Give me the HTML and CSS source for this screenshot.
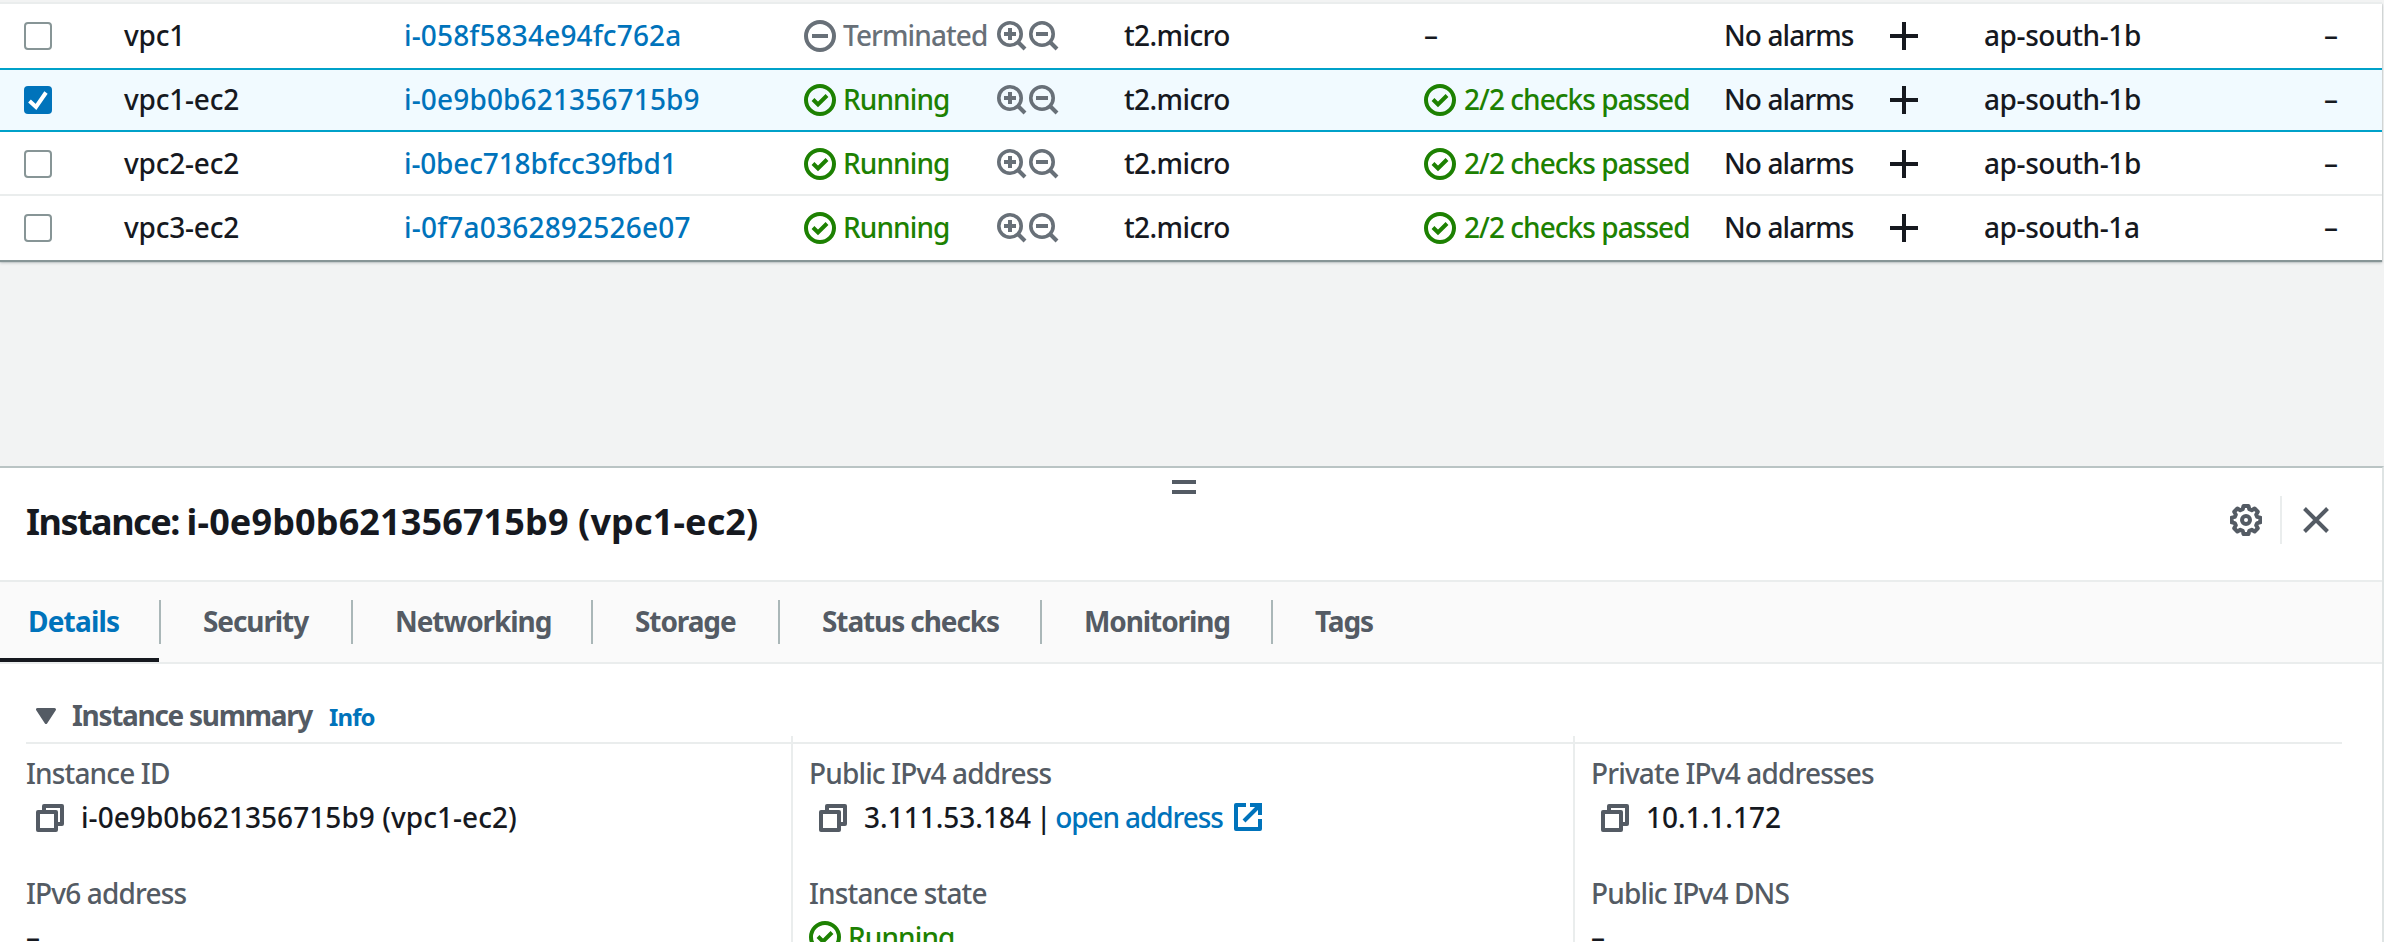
FILE: index.html
```html
<!DOCTYPE html>
<html lang="en">
<head>
<meta charset="utf-8">
<title>Instances | EC2</title>
<link rel="stylesheet" href="styles.css">
</head>
<body>
<svg class="sprite" aria-hidden="true">
  <symbol id="ok" viewBox="0 0 32 32"><circle cx="16" cy="16" r="14" fill="none" stroke="currentColor" stroke-width="4"/><path d="M9 15.5l5 5 9-9" fill="none" stroke="currentColor" stroke-width="4"/></symbol>
  <symbol id="stopped" viewBox="0 0 32 32"><circle cx="16" cy="16" r="14" fill="none" stroke="currentColor" stroke-width="4"/><path d="M8 16h16" stroke="currentColor" stroke-width="4"/></symbol>
  <symbol id="zoom-in" viewBox="0 0 30 30"><circle cx="13" cy="13" r="11.2" fill="none" stroke="currentColor" stroke-width="3.6"/><path d="M7 13h12M13 7v12" stroke="currentColor" stroke-width="4"/><path d="M20.5 20.5l7.5 7.5" stroke="currentColor" stroke-width="4"/></symbol>
  <symbol id="zoom-out" viewBox="0 0 30 30"><circle cx="13" cy="13" r="11.2" fill="none" stroke="currentColor" stroke-width="3.6"/><path d="M7 13h12" stroke="currentColor" stroke-width="4"/><path d="M20.5 20.5l7.5 7.5" stroke="currentColor" stroke-width="4"/></symbol>
  <symbol id="plus" viewBox="0 0 28 28"><path d="M14 0v28M0 14h28" stroke="currentColor" stroke-width="4"/></symbol>
  <symbol id="copy" viewBox="0 0 28 28"><path d="M8 8V2h18v18h-4" fill="none" stroke="currentColor" stroke-width="4" stroke-linejoin="round"/><path d="M2 8h18v18H2z" fill="none" stroke="currentColor" stroke-width="4" stroke-linejoin="round"/></symbol>
  <symbol id="external" viewBox="0 0 28 28"><path d="M12 2H2v24h24V16" fill="none" stroke="currentColor" stroke-width="4" stroke-linejoin="round"/><path d="M16 2h10v10" fill="none" stroke="currentColor" stroke-width="4"/><path d="M10 18L25 3" stroke="currentColor" stroke-width="4"/></symbol>
</svg>

<main class="page">
  <section class="table">
    <div class="row">
      <span class="check"></span><span class="cell">vpc1</span><a class="cell link id-a">i-058f5834e94fc762a</a>
      <span class="state muted"><svg class="i32"><use href="#stopped"/></svg><span class="cell tight state-text">Terminated</span><svg class="i30"><use href="#zoom-in"/></svg><svg class="i30"><use href="#zoom-out"/></svg></span>
      <span class="cell type">t2.micro</span><span class="cell">–</span>
      <span class="alarm"><span class="cell tight alarm-text">No alarms</span><svg class="i28"><use href="#plus"/></svg></span>
      <span class="cell zone">ap-south-1b</span><span class="cell">–</span>
    </div>
    <div class="row selected">
      <span class="check checked"><svg viewBox="0 0 28 28"><path d="M5.500 15l6.500 6L22 6.500" fill="none" stroke="#fff" stroke-width="4"/></svg></span><span class="cell">vpc1-ec2</span><a class="cell link id-b">i-0e9b0b621356715b9</a>
      <span class="state"><svg class="i32 green"><use href="#ok"/></svg><span class="cell tight state-text green">Running</span><svg class="i30"><use href="#zoom-in"/></svg><svg class="i30"><use href="#zoom-out"/></svg></span>
      <span class="cell type">t2.micro</span><span class="status green"><svg class="i32"><use href="#ok"/></svg><span class="cell status-text">2/2 checks passed</span></span>
      <span class="alarm"><span class="cell tight alarm-text">No alarms</span><svg class="i28"><use href="#plus"/></svg></span>
      <span class="cell zone">ap-south-1b</span><span class="cell">–</span>
    </div>
    <div class="row">
      <span class="check"></span><span class="cell">vpc2-ec2</span><a class="cell link id-c">i-0bec718bfcc39fbd1</a>
      <span class="state"><svg class="i32 green"><use href="#ok"/></svg><span class="cell tight state-text green">Running</span><svg class="i30"><use href="#zoom-in"/></svg><svg class="i30"><use href="#zoom-out"/></svg></span>
      <span class="cell type">t2.micro</span><span class="status green"><svg class="i32"><use href="#ok"/></svg><span class="cell status-text">2/2 checks passed</span></span>
      <span class="alarm"><span class="cell tight alarm-text">No alarms</span><svg class="i28"><use href="#plus"/></svg></span>
      <span class="cell zone">ap-south-1b</span><span class="cell">–</span>
    </div>
    <div class="row">
      <span class="check"></span><span class="cell">vpc3-ec2</span><a class="cell link id-d">i-0f7a0362892526e07</a>
      <span class="state"><svg class="i32 green"><use href="#ok"/></svg><span class="cell tight state-text green">Running</span><svg class="i30"><use href="#zoom-in"/></svg><svg class="i30"><use href="#zoom-out"/></svg></span>
      <span class="cell type">t2.micro</span><span class="status green"><svg class="i32"><use href="#ok"/></svg><span class="cell status-text">2/2 checks passed</span></span>
      <span class="alarm"><span class="cell tight alarm-text">No alarms</span><svg class="i28"><use href="#plus"/></svg></span>
      <span class="cell zone">ap-south-1a</span><span class="cell">–</span>
    </div>
  </section>

  <section class="panel">
    <div class="handle"></div>
    <header class="panel-head">
      <h2 class="title"><span class="title-kind">Instance: </span>i-0e9b0b621356715b9 (vpc1-ec2)</h2>
      <div class="actions">
        <svg class="i32" viewBox="0 0 32 32" fill="none" stroke="currentColor" stroke-width="4"><path stroke-linejoin="round" d="M13.500 2h5l.8 3.200 2.400 1 2.900-1.700 3.200 3.200-1.600 2.900 1 2.300 3 .7v4.800l-3 .7-1 2.300 1.600 2.900-3.200 3.200-2.900-1.700-2.400 1-.8 3.200h-5l-.8-3.200-2.400-1-2.900 1.700-3.200-3.200 1.600-2.900-1-2.300-3-.7v-4.800l3-.7 1-2.300-1.600-2.900 3.200-3.200 2.900 1.700 2.400-1z"/><circle cx="16" cy="16" r="4"/></svg>
        <span class="rule"></span>
        <svg class="close" viewBox="0 0 26 26" stroke="currentColor" stroke-width="4"><path d="M1.500 1.500l23 23M24.500 1.500l-23 23"/></svg>
      </div>
    </header>
    <nav class="tabs">
      <a class="tab active">Details</a><a class="tab">Security</a><a class="tab">Networking</a><a class="tab">Storage</a><a class="tab">Status checks</a><a class="tab">Monitoring</a><a class="tab">Tags</a>
    </nav>
    <div class="summary">
      <svg class="caret" viewBox="0 0 20 16"><path d="M1.500 1.500h17L10 14.500z" fill="currentColor" stroke="currentColor" stroke-width="3" stroke-linejoin="round"/></svg>
      <h3 class="summary-title">Instance summary</h3><a class="info">Info</a>
    </div>
    <div class="details">
      <div class="col">
        <div class="label">Instance ID</div>
        <div class="value"><svg class="i28 copy"><use href="#copy"/></svg><span class="val-id">i-0e9b0b621356715b9 (vpc1-ec2)</span></div>
        <div class="label second">IPv6 address</div>
        <div class="value">–</div>
      </div>
      <div class="col">
        <div class="label">Public IPv4 address</div>
        <div class="value"><svg class="i28 copy"><use href="#copy"/></svg><span class="ip">3.111.53.184</span><span class="bar">|</span><a class="link open">open address</a><svg class="i28 link"><use href="#external"/></svg></div>
        <div class="label second">Instance state</div>
        <div class="value green"><svg class="i32"><use href="#ok"/></svg><span class="tight run">Running</span></div>
      </div>
      <div class="col">
        <div class="label">Private IPv4 addresses</div>
        <div class="value"><svg class="i28 copy"><use href="#copy"/></svg><span class="ip">10.1.1.172</span></div>
        <div class="label second">Public IPv4 DNS</div>
        <div class="value">–</div>
      </div>
    </div>
  </section>
</main>
</body>
</html>
```

FILE: styles.css
```css
* { box-sizing: border-box; }
body { margin: 0; background: #f2f3f3; color: #16191f; font: 500 28px/44px "Noto Sans", "Open Sans", sans-serif; letter-spacing: -0.2px; }
svg { display: block; flex: none; }
.sprite { display: none; }
.page { width: 2384px; height: 942px; overflow: hidden; display: flex; flex-direction: column; }
.i32 { width: 32px; height: 32px; }
.i30 { width: 30px; height: 30px; }
.i28 { width: 28px; height: 28px; }
.green { color: #1d8102; }
.link { color: #0073bb; }
.tight { letter-spacing: -0.9px; }

/* Instances table */
.table { width: 2382px; height: 258px; flex: none; margin-top: 2px; background: #fff; border-top: 2px solid #eaeded; box-shadow: 0 2px 1px #879596, 0 3px 3px rgba(0, 28, 36, 0.2); }
.row { height: 64px; padding-left: 24px; display: grid; grid-template-columns: 100px 280px 400px 320px 300px 300px 260px 340px 56px; align-items: center; white-space: nowrap; box-shadow: inset 0 -2px #eaeded; }
.row:first-child, .row:last-child { box-shadow: none; }
.row.selected { background: #f1faff; box-shadow: inset 0 2px #00a1c9, inset 0 -2px #00a1c9; }
.cell { margin-bottom: 2px; }
.check { width: 28px; height: 28px; border: 2px solid #879596; border-radius: 4px; background: #fff; }
.check.checked { border: 0; background: #0073bb; }
.id-a { letter-spacing: 0.15px; }
.id-b { letter-spacing: 0.15px; }
.id-c { letter-spacing: -0.15px; }
.id-d { letter-spacing: 0.2px; }
.type { letter-spacing: -0.6px; }
.zone { letter-spacing: -0.4px; }
.state { display: flex; align-items: center; color: #687078; }
.state-text { width: 154px; margin-left: 7px; }
.state .i30 { margin: -1px 2px 0 0; }
.status { width: 269px; overflow: hidden; display: flex; align-items: center; }
.status-text { margin-left: 8px; letter-spacing: -0.95px; }
.alarm { display: flex; align-items: center; }
.alarm-text { width: 166px; }

/* Split panel */
.panel { flex: 1; margin-top: 206px; position: relative; background: #fff; border-top: 2px solid #bac4c4; border-right: 2px solid #dfe4e4; color: #545b64; }
.handle { width: 24px; height: 14px; position: absolute; left: 1172px; top: 12px; border: solid #545b64; border-width: 4px 0; }
.panel-head { height: 112px; padding-left: 26px; display: flex; justify-content: space-between; }
.title { margin: 32px 0 0; font-size: 36px; line-height: 44px; font-weight: 700; letter-spacing: 0.12px; color: #16191f; }
.title-kind { letter-spacing: -1.5px; }
.actions { height: 48px; margin: 28px 53px 0 0; display: flex; align-items: center; }
.rule { width: 2px; height: 48px; margin: 0 21px 0 18px; background: #eaeded; }
.close { width: 26px; height: 26px; }
.tabs { height: 84px; display: grid; grid-template-columns: 160px 192px 240px 187px 262px 231px 200px; background: #fafafa; border: solid #eaeded; border-width: 2px 0; font-weight: 700; }
.tab { display: flex; align-items: center; padding: 0 0 2px 43px; letter-spacing: -1.1px; position: relative; }
.tab:first-child { padding-left: 28px; letter-spacing: -0.8px; }
.tab:not(:last-child)::after { content: ""; position: absolute; right: -1px; top: 18px; width: 2px; height: 44px; background: #aab7b8; }
.tab.active { color: #0073bb; }
.tab.active::before { content: ""; position: absolute; left: 0; bottom: 0; width: 159px; height: 4px; background: #16191f; }
.summary { height: 80px; margin: 0 40px 0 26px; padding: 29px 0 0 10px; display: flex; border-bottom: 2px solid #eaeded; }
.caret { width: 20px; height: 16px; margin: 15px 16px 0 0; }
.summary-title { margin: 0; font-size: 28px; font-weight: 700; letter-spacing: -1.3px; }
.info { margin: 2px 0 0 17px; font-size: 24px; font-weight: 700; letter-spacing: -0.9px; color: #0073bb; }
.details { display: grid; grid-template-columns: 783px 782px 1fr; margin-top: -8px; padding-left: 8px; }
.col { height: 230px; padding: 15px 0 0 16px; white-space: nowrap; }
.col:first-child { padding-left: 18px; }
.col + .col { border-left: 2px solid #eaeded; }
.label { letter-spacing: -0.85px; }
.second { margin-top: 32px; }
.value { height: 44px; display: flex; align-items: center; color: #16191f; }
.value.green { color: #1d8102; }
.copy { margin: 2px 17px 0 10px; color: #545b64; }
.val-id { letter-spacing: 0.05px; }
.ip { letter-spacing: 0; }
.bar { margin: 0 4px 0 5px; }
.open { letter-spacing: -1.1px; margin-right: 11px; }
.run { margin-left: 7px; }
```
